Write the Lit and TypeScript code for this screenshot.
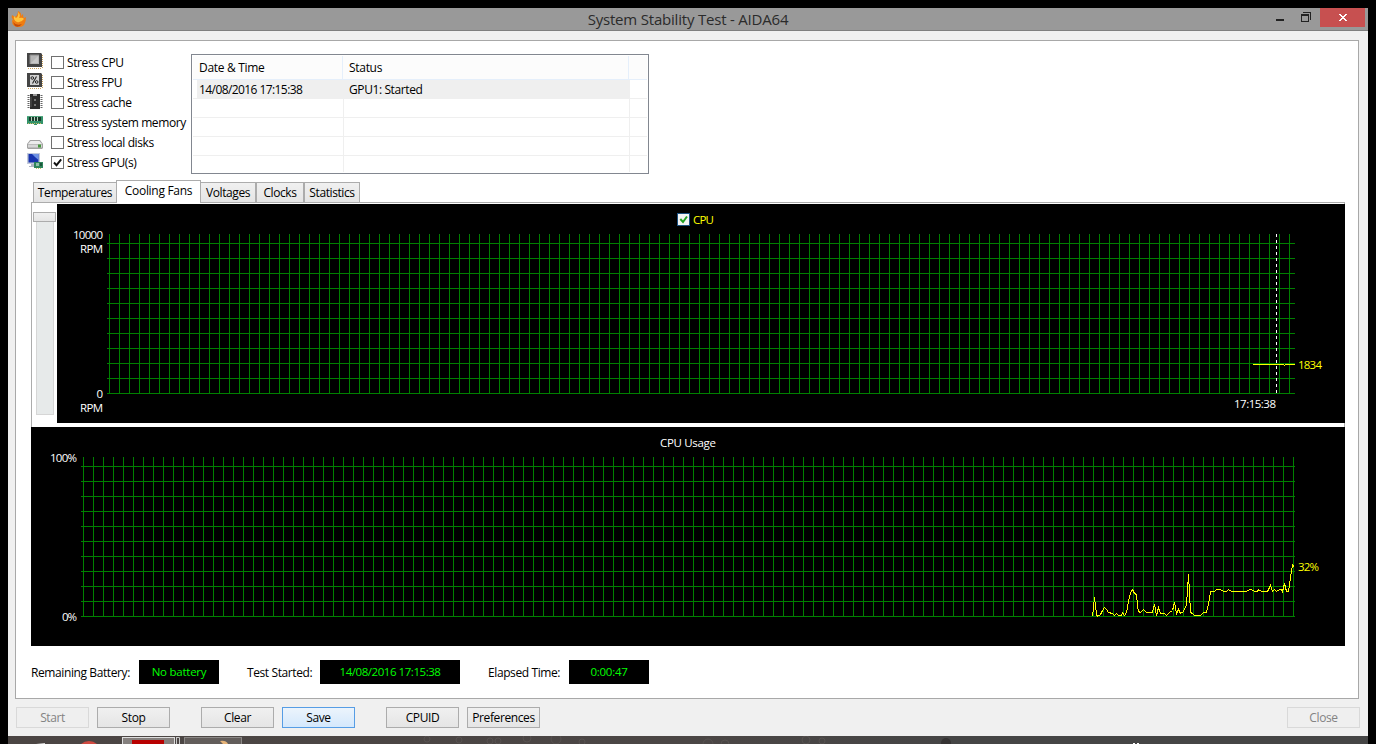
import { LitElement, html, svg, css } from "lit";
import { customElement, property } from "lit/decorators.js";

const range = (from: number, to: number, step: number) => {
  const out: number[] = [];
  for (let v = from; v <= to; v += step) out.push(v);
  return out;
};

const cpuBase = svg`
  <path d="M1 15.5H15M15.5 2V15" stroke="#c9a15c" stroke-dasharray="1 1" stroke-width="1"/>
  <path d="M0 0H14L15 1V14H0Z" fill="#454545"/>`;

const icons: Record<string, unknown> = {
  cpu: svg`${cpuBase}<rect x="3" y="2" width="9" height="9" fill="#b5b5b5"/><path d="M3 11V2H12" fill="none" stroke="#8a8a8a"/><path d="M4 10L11 3V10Z" fill="#c8c8c8"/>`,
  fpu: svg`${cpuBase}<rect x="3" y="2" width="9" height="10" fill="#d2d2d2"/><circle cx="5.300" cy="5" r="1.300" fill="none" stroke="#222"/><circle cx="9.700" cy="9" r="1.300" fill="none" stroke="#222"/><path d="M9.500 3.500L5.500 10.500" fill="none" stroke="#222" stroke-width="1.100"/>`,
  cache: svg`<g transform="translate(0 1)"><path d="M1.500 1V14M14.500 1V14" stroke="#666" stroke-width="2" stroke-dasharray="1 1"/><path d="M3 0H13V15H3Z" fill="#2c2c2c"/><rect x="6" y="0" width="4" height="2" fill="#999"/><path d="M4 3V13" stroke="#555"/><rect x="7" y="5" width="2" height="2" fill="#777"/><rect x="7" y="10" width="2" height="2" fill="#777"/></g>`,
  memory: svg`<g transform="translate(0 1)"><path d="M0 2H16V10H10V11H7V10H0Z" fill="#33926a"/><path d="M2 3H14V7H2Z" fill="#173b2a"/><path d="M4.500 3V7M7.500 3V7M10.500 3V7" stroke="#b9cdbf" stroke-width="1"/><path d="M1 9.500H15" stroke="#c9bd66" stroke-dasharray="1 1"/><path d="M0 2.500H16" stroke="#52a77f"/></g>`,
  disk: svg`<g transform="translate(0 1)"><path d="M3 6H13L16 10V14L15 15H1L0 14V10Z" fill="#a2a2a2"/><path d="M3.500 7H12.500L15 10H1Z" fill="#ececec"/><path d="M1 10.500H15V13.500H1Z" fill="#d6d6d6"/><rect x="11" y="10.500" width="3" height="3" fill="#46973d"/></g>`,
  gpu: svg`<rect x="0" y="0" width="13" height="11" fill="#c3cadb"/><rect x="1.500" y="1" width="10" height="8.500" fill="#1733ad"/><path d="M5 1H11.500V7L8 4Z" fill="#6e92e4"/><path d="M4 11H9V13H11V14H2V13H4Z" fill="#aeb4c1"/><rect x="7" y="9" width="9" height="6" fill="#2f855c"/><rect x="9" y="10" width="3" height="3" fill="#92bfa8"/><rect x="13" y="10" width="2" height="3" fill="#1b573b"/><path d="M9 15.500H15" stroke="#c9bd66" stroke-dasharray="1 1"/>`,
};

@customElement("stress-option")
class StressOption extends LitElement {
  @property() icon = "cpu";
  @property() label = "";
  @property({ type: Boolean }) checked = false;

  static styles = css`
    :host { display: flex; height: 20px; align-items: center; white-space: nowrap; }
    .icon { width: 16px; height: 16px; margin: 0 8px 2px 0; flex: none; }
    .box { width: 13px; height: 13px; margin-right: 3px; flex: none; }
    .label { padding-top: 1px; }
  `;

  render() {
    return html`
      <svg class="icon" viewBox="0 0 16 16">${icons[this.icon]}</svg>
      <svg class="box" viewBox="0 0 13 13">
        <rect x=".5" y=".5" width="12" height="12" fill="#fff" stroke="#707070" />
        ${this.checked ? svg`<path d="M3 6.500L5.500 9.200L10.200 3.300" fill="none" stroke="#111" stroke-width="1.900"/>` : ""}
      </svg>
      <span class="label">${this.label}</span>`;
  }
}

@customElement("fan-chart")
class FanChart extends LitElement {
  static styles = css`
    :host { display: block; letter-spacing: 0; }
    svg { display: block; }
    text { font-size: 11.5px; fill: #fff; }
    .hot { fill: #ff0; }
  `;

  render() {
    return html`<svg width="1288" height="219" viewBox="57 204 1288 219">
      <rect x="57" y="204" width="1288" height="219" fill="#000" />
      <g stroke="#008000" shape-rendering="crispEdges">
        ${range(109, 1289, 10).map((x) => svg`<path d="M${x + 0.5} 234V394"/>`)}
        ${range(243, 393, 15).map((y) => svg`<path d="M107 ${y + 0.5}H1295"/>`)}
      </g>
      <path d="M1276.500 234V393" stroke="#fff" stroke-dasharray="3 3" shape-rendering="crispEdges" />
      <path d="M1253 364.500H1284M1284 365.500H1285M1285 364.500H1295" stroke="#ff0" shape-rendering="crispEdges" />
      <rect x="677.500" y="213.500" width="12" height="12" fill="#f4f4f4" stroke="#1c5180" />
      <path d="M680.300 219L683 222L687 216.500" fill="none" stroke="#21a121" stroke-width="2" />
      <text class="hot" x="693" y="224" textLength="21">CPU</text>
      <text x="73" y="239" textLength="30">10000</text>
      <text x="80" y="253" textLength="23">RPM</text>
      <text x="96.500" y="398">0</text>
      <text x="80" y="412" textLength="23">RPM</text>
      <text class="hot" x="1298" y="369" textLength="24">1834</text>
      <text x="1234" y="408" textLength="42">17:15:38</text>
    </svg>`;
  }
}

const usage = [
  [1092, 616], [1094, 597], [1096, 614], [1097, 616], [1100, 614], [1102, 610], [1104, 607], [1106, 609], [1108, 612],
  [1112, 613], [1114, 615], [1116, 613], [1118, 615], [1121, 615], [1122, 612], [1124, 615], [1126, 612], [1128, 601],
  [1130, 592], [1132, 589], [1134, 593], [1136, 594], [1137, 605], [1138, 611], [1140, 612], [1143, 609], [1146, 612],
  [1152, 612], [1154, 604], [1156, 615], [1158, 607], [1160, 613], [1164, 613], [1166, 615], [1169, 612], [1172, 610],
  [1174, 602], [1176, 613], [1178, 609], [1180, 613], [1183, 611], [1186, 604], [1188, 574], [1190, 612], [1192, 613],
  [1194, 615], [1200, 615], [1203, 612], [1206, 612], [1208, 604], [1210, 591], [1214, 591], [1216, 589], [1220, 589],
  [1223, 591], [1226, 591], [1228, 589], [1231, 591], [1246, 591], [1249, 589], [1251, 589], [1254, 591], [1257, 591],
  [1258, 589], [1261, 591], [1267, 591], [1270, 585], [1272, 591], [1274, 589], [1276, 591], [1279, 589], [1281, 589],
  [1282, 591], [1284, 583], [1286, 591], [1288, 591], [1290, 577], [1292, 564], [1294, 567],
];

@customElement("usage-chart")
class UsageChart extends LitElement {
  static styles = css`
    :host { display: block; letter-spacing: 0; }
    svg { display: block; }
    text { font-size: 11.5px; fill: #fff; }
    .hot { fill: #ff0; }
  `;

  render() {
    return html`<svg width="1314" height="219" viewBox="31 427 1314 219">
      <rect x="31" y="427" width="1314" height="219" fill="#000" />
      <g stroke="#008000" shape-rendering="crispEdges">
        ${range(83, 1293, 10).map((x) => svg`<path d="M${x + 0.5} 457V617"/>`)}
        ${range(466, 616, 15).map((y) => svg`<path d="M81 ${y + 0.5}H1295"/>`)}
      </g>
      <polyline points=${usage.map(([x, y]) => `${x + 0.5},${y + 0.5}`).join(" ")} fill="none" stroke="#ff0" shape-rendering="crispEdges" />
      <text x="660" y="447" textLength="56">CPU Usage</text>
      <text x="50" y="462" textLength="27">100%</text>
      <text x="62" y="621" textLength="15">0%</text>
      <text class="hot" x="1298" y="571" textLength="21">32%</text>
    </svg>`;
  }
}

@customElement("app-root")
class AppRoot extends LitElement {
  static styles = css`
    :host {
      display: block; width: 1376px; height: 744px; box-sizing: border-box; padding: 8px 8px 0;
      background: #000; overflow: hidden; color: #000;
      font: 12px/16px "Open Sans", "Noto Sans", sans-serif; letter-spacing: -0.4px;
    }
    * { box-sizing: border-box; }
    .window { height: 728px; background: #f0f0f0; display: flex; flex-direction: column; }
    .title {
      height: 23px; flex: none; background: #999; border-bottom: 1px solid #7f7f7f;
      display: grid; grid-template-columns: 200px 1fr 200px;
    }
    .flame { width: 16px; height: 17px; margin: 3px 0 0 3px; }
    .caption { text-align: center; font-size: 15px; letter-spacing: -0.2px; line-height: 23px; color: #2b2b2b; }
    .controls { display: flex; justify-content: flex-end; padding-right: 3px; }
    .controls svg { display: block; }
    .panel {
      width: 1344px; height: 659px; margin: 9px 0 0 7px; padding: 13px 0 0 15px; flex: none;
      border: 1px solid #a8a8a8; background: #fff;
    }
    .top { display: flex; height: 126px; }
    .options { width: 164px; margin: -2px 0 0 -4px; }
    .log {
      width: 458px; height: 120px; border: 1px solid #828790; padding: 1px; white-space: nowrap;
      display: grid; grid-template-rows: 24px 19px 19px 19px 19px 1fr;
    }
    .row { display: grid; grid-template-columns: 151px 286px 1fr; border-bottom: 1px solid #efefef; line-height: 19px; }
    .row:last-child { border-bottom: 0; }
    .row span { padding-left: 6px; border-right: 1px solid #efefef; }
    .row span:nth-child(2) { padding-left: 5px; }
    .row span:last-child, .head span:last-child { border-right: 0; }
    .row .date { letter-spacing: -0.58px; }
    .head {
      display: grid; grid-template-columns: 150px 286px 1fr; background: #fcfcfc;
      border-bottom: 1px solid #e5effb; line-height: 23px; letter-spacing: -0.3px;
    }
    .head span { padding-left: 6px; border-right: 1px solid #e5effb; }
    .row.sel { background: linear-gradient(90deg, #fff 4px, #efefef 4px 437px, #fff 437px); }
    .tabs { display: flex; height: 22px; padding-left: 2px; align-items: flex-end; white-space: nowrap; }
    .tab {
      height: 20px; border: 1px solid #acacac; border-bottom: 0; background: linear-gradient(#f0f0f0, #e5e5e5);
      text-align: center; line-height: 20px;
    }
    .tab.on { height: 23px; margin: 0 -1px -1px; background: #fff; position: relative; line-height: 20px; letter-spacing: -0.3px; }
    .pane { width: 1314px; height: 225px; border: 1px solid #acacac; border-bottom: 0; padding-top: 1px; display: flex; }
    .slider { width: 25px; flex: none; padding: 8px 0 0 1px; }
    .thumb { width: 23px; height: 10px; border: 1px solid #acacac; background: linear-gradient(#f0f0f0, #e5e5e5); }
    .rail { width: 18px; height: 193px; margin-left: 3px; background: #e7eaea; border: 1px solid #d6d6d6; border-top: 0; }
    .pane fan-chart { margin-right: -1px; }
    .status { display: flex; height: 24px; margin-top: 14px; line-height: 26px; white-space: nowrap; }
    .status label { width: 108px; }
    .status .l2 { padding-left: 28px; width: 101px; }
    .status .l3 { padding-left: 28px; width: 109px; }
    .led { width: 80px; background: #000; color: #0f0; text-align: center; line-height: 24px; font-size: 11.5px; letter-spacing: -0.25px; }
    .led.wide { width: 140px; letter-spacing: -0.45px; }
    .buttons { display: flex; padding: 8px 8px 0 8px; gap: 8px; }
    button {
      width: 73px; height: 21px; padding: 0; border: 1px solid #acacac; color: #000; white-space: nowrap;
      background: linear-gradient(#f0f0f0, #e5e5e5); font: inherit; letter-spacing: inherit; line-height: 19px;
    }
    button:disabled { color: #838383; border-color: #d9d9d9; background: #efefef; }
    .focus { border-color: #569de5; background: linear-gradient(#ecf4fc, #d4e8fc); }
    .gap { margin-left: 23px; }
    .far { margin-left: auto; }
    .taskbar { display: block; }
  `;

  render() {
    return html`
      <div class="window">
        <header class="title">
          <svg class="flame" viewBox="0 0 16 17">
            <path d="M7 0Q11 2 10 5L12 3Q12 6 13 7L15 6Q15 16 8 16Q1 16 1 10L2 8Q0 7 1 4L4 6Q7 4 7 0Z" fill="#ef7d12" />
            <path d="M7 1Q10 4 8 7Q12 6 13 8Q10 12 6 11Q2 9 3 5L5 7Q8 5 7 1Z" fill="#ffc43b" />
            <path d="M2 11Q5 15 11 13Q8 17 4 15Z" fill="#c44a08" />
          </svg>
          <span class="caption">System Stability Test - AIDA64</span>
          <div class="controls">
            <svg width="90" height="22" viewBox="1275 8 90 22" shape-rendering="crispEdges">
              <rect x="1276" y="19" width="8" height="2" fill="#222" />
              <path d="M1303 12.500H1310.500V20M1301.500 14.500H1308.500V21.500H1301.500ZM1301 15.500H1309" fill="none" stroke="#222" />
              <rect x="1320" y="8" width="45" height="19" fill="#c75050" />
              <path d="M1339 14h2v1h1v1h2v-1h1v-1h2v1h-1v1h-1v1h-1v1h1v1h1v1h1v1h-2v-1h-1v-1h-2v1h-1v1h-2v-1h1v-1h1v-1h1v-1h-1v-1h-1v-1h-1z" fill="#fff" />
            </svg>
          </div>
        </header>

        <main class="panel">
          <section class="top">
            <div class="options">
              <stress-option icon="cpu" label="Stress CPU"></stress-option>
              <stress-option icon="fpu" label="Stress FPU"></stress-option>
              <stress-option icon="cache" label="Stress cache"></stress-option>
              <stress-option icon="memory" label="Stress system memory"></stress-option>
              <stress-option icon="disk" label="Stress local disks"></stress-option>
              <stress-option icon="gpu" label="Stress GPU(s)" checked></stress-option>
            </div>
            <div class="log">
              <div class="head"><span>Date &amp; Time</span><span>Status</span><span></span></div>
              <div class="row sel"><span class="date">14/08/2016 17:15:38</span><span>GPU1: Started</span><span></span></div>
              ${[0, 1, 2, 3].map(() => html`<div class="row"><span></span><span></span><span></span></div>`)}
            </div>
          </section>
          <nav class="tabs">
            ${[["Temperatures", 84], ["Cooling Fans", 85], ["Voltages", 56], ["Clocks", 48], ["Statistics", 56]].map(
              ([name, w], i) => html`<div class="tab ${i === 1 ? "on" : ""}" style="width:${w}px">${name}</div>`
            )}
          </nav>
          <section class="pane">
            <div class="slider"><div class="thumb"></div><div class="rail"></div></div>
            <fan-chart></fan-chart>
          </section>
          <usage-chart></usage-chart>
          <section class="status">
            <label>Remaining Battery:</label><div class="led">No battery</div>
            <label class="l2">Test Started:</label><div class="led wide">14/08/2016 17:15:38</div>
            <label class="l3">Elapsed Time:</label><div class="led">0:00:47</div>
          </section>
        </main>

        <footer class="buttons">
          <button disabled>Start</button><button>Stop</button>
          <button class="gap">Clear</button><button class="focus">Save</button>
          <button class="gap">CPUID</button><button>Preferences</button>
          <button class="far" disabled>Close</button>
        </footer>
      </div>
      <svg class="taskbar" width="1360" height="8" viewBox="8 736 1360 8">
        <defs><linearGradient id="wood"><stop offset="0" stop-color="#4b4543" /><stop offset=".5" stop-color="#4b4645" /><stop offset=".7" stop-color="#454545" /><stop offset="1" stop-color="#454545" /></linearGradient></defs>
        <rect x="8" y="736" width="1360" height="8" fill="url(#wood)" />
        <path d="M36 744L45 743V744Z" fill="#ddd" />
        <circle cx="89" cy="753" r="12" fill="#d14a41" />
        <rect x="122.500" y="737.500" width="52" height="10" fill="#85807e" stroke="#ddd" />
        <path d="M176.500 737V744M179.500 744V737.500H176" stroke="#c9c9c9" fill="none" />
        <rect x="132" y="740" width="32" height="4" fill="#b80000" />
        <rect x="184.500" y="737.500" width="57" height="10" fill="#625d5b" stroke="#8b8886" />
        <path d="M220 741Q226 740 228 744H223Z" fill="#e7b478" />
        <g fill="none" stroke="#5d5756" stroke-opacity=".7"><circle cx="427" cy="739" r="3"/><circle cx="459" cy="740" r="3"/><circle cx="490" cy="741" r="3"/><circle cx="498" cy="741" r="3"/><circle cx="527" cy="738" r="4"/><circle cx="556" cy="739" r="5"/><circle cx="582" cy="742" r="3"/><circle cx="708" cy="744" r="5"/><circle cx="725" cy="744" r="4"/><circle cx="806" cy="740" r="4"/><circle cx="822" cy="741" r="3"/></g>
        <circle cx="946" cy="743" r="5" fill="#353333" />
        <path d="M1133 743h2v1h-2zM1137 743h2v1h-2z" fill="#fff" />
      </svg>`;
  }
}
